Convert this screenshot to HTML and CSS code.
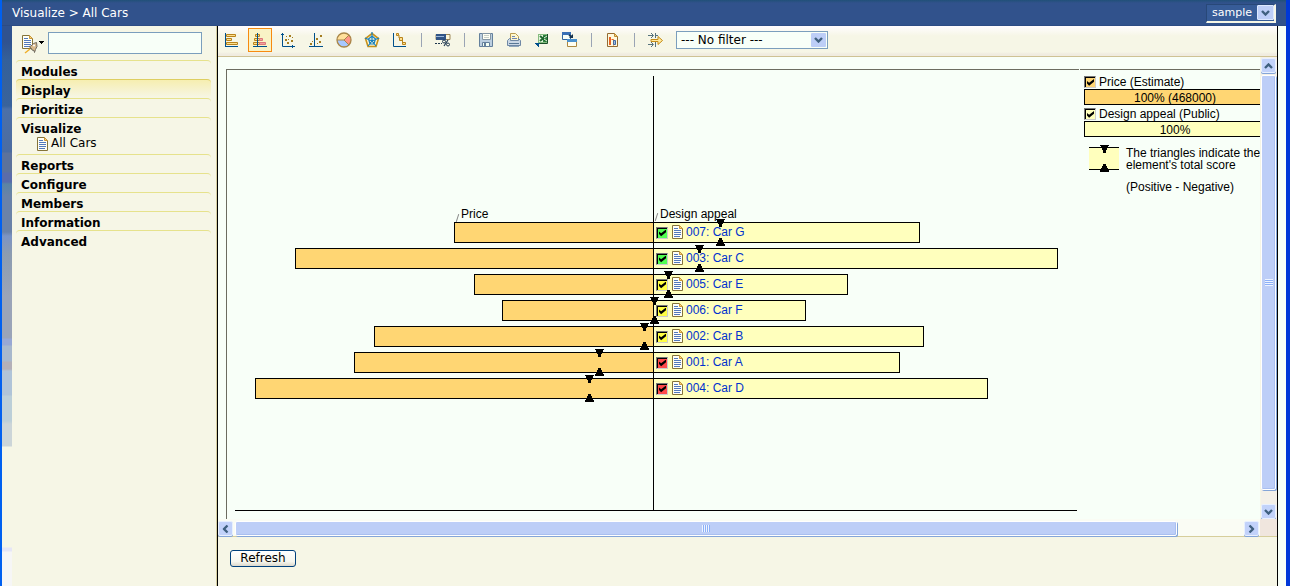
FILE: index.html
```html
<!DOCTYPE html>
<html lang="en">
<head>
<meta charset="utf-8">
<title>Visualize &gt; All Cars</title>
<link rel="stylesheet" href="styles.css">
</head>
<body>
<svg class="defs" aria-hidden="true">
  <symbol id="doc" viewBox="0 0 12 14"><path d="M.5.5h7l3 3v10H.5z" fill="#fffff6" stroke="#84733a"/><path d="M7.5.5v3h3z" fill="#ffd87a" stroke="#c8963a"/><path d="M2 3.500h4M2 5.500h7M2 7.500h7M2 9.500h7M2 11.500h6" stroke="#5278bd"/></symbol>
  <symbol id="chev" viewBox="0 0 9 6"><path d="M1 1l3.5 3.5L8 1" fill="none" stroke="#3f607f" stroke-width="2.4"/></symbol>
  <symbol id="marker" viewBox="0 0 9 27"><path d="M0 0h9v1H8v2H7v2H6v3H3V5H2V3H1V1H0zM3 19h3v2h1v2h1v2h1v2H0v-2h1v-2h1v-2h1z"/></symbol>
</svg>
<header class="topbar">
  <div class="crumbs">Visualize &gt; All Cars</div>
  <div class="account"><select aria-label="Account"><option>sample</option></select><span class="arrow"><svg><use href="#chev"/></svg></span></div>
</header>
<div class="main">
  <div class="strip"></div>
  <nav class="sidebar">
    <div class="search">
      <button class="new" aria-label="New item"><svg viewBox="0 0 23 19"><path d="M.5.5h7l3 3v10H.5z" fill="#fffff6" stroke="#84733a"/><path d="M7.5.5v3h3z" fill="#ffd87a" stroke="#c8963a"/><path d="M2 3.500h4M2 5.500h7M2 7.500h7M2 9.500h7M2 11.500h5" stroke="#5278bd"/><path d="M14.500 7.500l-3 1-2.500 2.500-2 .5 2 1.500 1 2 2 .5.500 2 1-3 1.500-3z" fill="#d8b88c" stroke="#6f6960"/><circle cx="12" cy="10.500" r="1" fill="#fff"/><path d="M3 18l5-4" stroke="#f0ae28" stroke-width="1.500"/><path d="M17 6h5v1h-1v1h-1v1h-1V8h-1V7h-1z"/></svg></button>
      <input type="text" aria-label="Search">
    </div>
    <ul class="menu">
      <li><a href="#">Modules</a></li>
      <li class="current"><a href="#">Display</a></li>
      <li><a href="#">Prioritize</a></li>
      <li><a href="#">Visualize</a>
        <a class="sub" href="#"><svg><use href="#doc"/></svg>All Cars</a></li>
      <li><a href="#">Reports</a></li>
      <li><a href="#">Configure</a></li>
      <li><a href="#">Members</a></li>
      <li><a href="#">Information</a></li>
      <li><a href="#">Advanced</a></li>
    </ul>
  </nav>
  <main class="content">
    <div class="toolbar">
      <button class="tool" aria-label="Bar chart"><svg viewBox="0 0 16 16"><path d="M2.500 2.500h9v2h-9zM2.500 6.500h5v2h-5zM2.500 10.500h11v2h-11z" fill="#ffe08c" stroke="#b8831c"/><path d="M1.500 1v13M1 14.500h13" stroke="#00508c" fill="none"/></svg></button>
      <button class="tool selected" aria-label="Skyline chart"><svg viewBox="0 0 16 16"><path d="M3.500 2.500h4v2h-4zM2.500 6.500h5v2h-5zM1.500 10.500h6v2h-6z" fill="#ffe08c" stroke="#b8831c"/><path d="M7.500 6.500h3v2h-3zM7.500 10.500h6v2h-6z" fill="#f7a0a0" stroke="#dc7979"/><path d="M5.500 1v13M1 14.500h14" stroke="#00508c"/></svg></button>
      <button class="tool" aria-label="Scatter chart"><svg viewBox="0 0 16 16"><path d="M2.500 1v13.500H15M1 2.500h3M12.500 13v3" stroke="#00508c" fill="none"/><path d="M6 4h1v1H6zM9 3h2v2H9zM5 7h2v2H5zM8 7h1v1H8zM11 8h2v2h-2zM7 10h2v2H7zM12 5h1v1h-1z" fill="#a47c20"/></svg></button>
      <button class="tool" aria-label="Portfolio chart"><svg viewBox="0 0 16 16"><path d="M6.500 1v13M1 14.500h14" stroke="#00508c"/><path d="M12 3h2v2h-2zM8 6h2v2H8zM11 9h2v2h-2zM2 11h2v2H2zM4 9h1v1H4zM9 11h1v1H9z" fill="#a47c20"/></svg></button>
      <button class="tool" aria-label="Pie chart"><svg viewBox="0 0 16 16"><circle cx="8" cy="8" r="7" fill="#ffe09a"/><path d="M8 8l5-5a7 7 0 0 1 0 10z" fill="#ff9588"/><path d="M8 8l5 5A7 7 0 0 1 1 8z" fill="#a8c8ff"/><path d="M1 8h7l5-5M8 8l5 5" stroke="#a98648" fill="none"/><circle cx="8" cy="8" r="7" fill="none" stroke="#a98648" stroke-width="1.300"/></svg></button>
      <button class="tool" aria-label="Radar chart"><svg viewBox="0 0 16 16"><path d="M8 1.500l6.500 5-2.500 8H4l-2.500-8z" fill="#fff6d0" stroke="#c8921a" stroke-width="1.600"/><path d="M8 0v9M8 9l7-3M8 9l4 5M8 9l-4 5M8 9L1 6M8 4l3.500 3L10 12H6L4.500 7z" fill="none" stroke="#1680c0" stroke-width="1.200"/></svg></button>
      <button class="tool" aria-label="Step chart"><svg viewBox="0 0 16 16"><path d="M1.500 1v13.500H14" stroke="#00508c" fill="none"/><path d="M4.500 1.500h2v2h-2zM7.500 5.500h3v3h-3zM10.500 10.500h3v2h-3z" fill="#ffe08c" stroke="#b8831c"/><path d="M7 3v3M10.500 8v3" stroke="#b8831c"/></svg></button>
      <span class="sep"></span>
      <button class="tool" aria-label="Show percentages"><svg viewBox="0 0 16 16"><path d="M1 2.500h14v5H1z" fill="#fff8d8" stroke="#9b8558"/><path d="M1 2h10v6H1z" fill="#315486"/><path d="M1 4h8v1H1z" fill="#9cb8dc"/><path d="M0 11.500h2M3 11.500h2M6 11.500h1M13 8l-4 6" stroke="#203850" stroke-width="1.200"/><circle cx="9" cy="9.500" r="1.500" fill="none" stroke="#203850"/><circle cx="13" cy="12.500" r="1.500" fill="none" stroke="#203850"/></svg></button>
      <span class="sep"></span>
      <button class="tool" aria-label="Save"><svg viewBox="0 0 16 16"><path d="M1.500 1.500h13v13h-13z" fill="#bccfe0" stroke="#64809c"/><path d="M4.500 1.500h8v6h-8z" fill="#fffff4" stroke="#8496a4"/><path d="M6 3.500h5M6 5.500h5" stroke="#c8d0c8"/><path d="M4.500 10.500h7v4h-7z" fill="#f4fff4" stroke="#64809c"/><path d="M6 11h2v3H6z" fill="#64809c"/></svg></button>
      <button class="tool" aria-label="Print"><svg viewBox="0 0 16 16"><path d="M4.500 8.500v-7h5l3 3v4" fill="#fff7cc" stroke="#b89b50"/><path d="M6 4.500h3M6 6.500h5" stroke="#6d86b8"/><path d="M1.500 8.500l2-2h1v2h8v-2l2 2v5h-13z" fill="#cad7e5" stroke="#6f88a5"/><path d="M3 11.500h10" stroke="#587795"/><path d="M3 14.500h10" stroke="#8ea5bb"/></svg></button>
      <button class="tool" aria-label="Export to spreadsheet"><svg viewBox="0 0 16 16"><path d="M4 2h10v9H4z" fill="#86bc80"/><path d="M5 3h4v7H5z" fill="#e8f7df"/><path d="M9 3h5v7H9z" fill="#318641"/><path d="M6 4l6 5M12 4L6 9" stroke="#1e6a2e" stroke-width="2"/><path d="M10 7l3 2M10 6l3-2" stroke="#e8f7df"/><path d="M13.500 2v9.500H6" fill="none" stroke="#194f27"/><path d="M1 11h5v1H5v3H4v-1H3v-1H2v-1H1z" fill="#00508c"/></svg></button>
      <button class="tool" aria-label="Copy window"><svg viewBox="0 0 16 16"><path d="M.5.5h8v7h-8z" fill="#f8fff8" stroke="#32659d"/><path d="M0 0h9v3H0z" fill="#3970b5"/><path d="M7 3l3 2" stroke="#17334c" stroke-width="2"/><path d="M11 2v4H7z" fill="#17334c"/><path d="M5.500 7.500h9v7h-9z" fill="#fffff0" stroke="#ad8840"/><path d="M5 7h10v3H5z" fill="#4b91ce"/></svg></button>
      <span class="sep"></span>
      <button class="tool" aria-label="Report"><svg viewBox="0 0 16 16"><path d="M2.500 1.500h7l3 3v10h-10z" fill="#fff9dc" stroke="#946b32"/><path d="M9.500 1.500v3h3z" fill="#ffd37a" stroke="#bc8d35"/><path d="M4 5h2v8H4z" fill="#e66224"/><path d="M6.500 7.500h2v6" fill="none" stroke="#e66224"/><path d="M8.500 8.500h2v4h-2z" fill="#9cb8e0" stroke="#426aa0"/></svg></button>
      <span class="sep"></span>
      <button class="tool" aria-label="Filter"><svg viewBox="0 0 16 16"><path d="M0 3.500h5M3 1l2.500 2.500L3 6M10 3.500H7M7.500 1v5M0 12.500h5M3 10l2.500 2.500L3 15M7.500 10v5" fill="none" stroke="#56727c"/><path d="M3 7.500h7v-3l4.500 4-4.500 4v-3H3z" fill="#ffeaa0" stroke="#c48b16"/></svg></button>
      <div class="filter"><select aria-label="Filter"><option>--- No filter ---</option></select><span class="arrow"><svg><use href="#chev"/></svg></span></div>
    </div>
    <div class="pane">
      <div class="view">
        <section class="chart">
          <div class="plot">
            <div class="axis"><i></i><i></i></div>
            <div class="row heads">
              <div class="neg"><span class="head" style="width:47.6%">Price</span></div>
              <div class="pos"><span class="head">Design appeal</span></div>
            </div>
            <div class="row"><div class="neg"><div class="bar" style="width:47.6%"></div></div><div class="pos"><div class="bar" style="width:63%"><input class="green" type="checkbox" checked aria-label="Select Car G"><a href="#"><svg><use href="#doc"/></svg>007: Car G</a></div></div><svg class="marker" style="left:57.6%"><use href="#marker"/></svg></div>
            <div class="row"><div class="neg"><div class="bar" style="width:85.6%"></div></div><div class="pos"><div class="bar" style="width:95.5%"><input class="green" type="checkbox" checked aria-label="Select Car C"><a href="#"><svg><use href="#doc"/></svg>003: Car C</a></div></div><svg class="marker" style="left:55.1%"><use href="#marker"/></svg></div>
            <div class="row"><div class="neg"><div class="bar" style="width:42.8%"></div></div><div class="pos"><div class="bar" style="width:46%"><input class="yellow" type="checkbox" checked aria-label="Select Car E"><a href="#"><svg><use href="#doc"/></svg>005: Car E</a></div></div><svg class="marker" style="left:51.4%"><use href="#marker"/></svg></div>
            <div class="row"><div class="neg"><div class="bar" style="width:36.1%"></div></div><div class="pos"><div class="bar" style="width:36.1%"><input class="yellow" type="checkbox" checked aria-label="Select Car F"><a href="#"><svg><use href="#doc"/></svg>006: Car F</a></div></div><svg class="marker" style="left:49.8%"><use href="#marker"/></svg></div>
            <div class="row"><div class="neg"><div class="bar" style="width:66.7%"></div></div><div class="pos"><div class="bar" style="width:63.9%"><input class="yellow" type="checkbox" checked aria-label="Select Car B"><a href="#"><svg><use href="#doc"/></svg>002: Car B</a></div></div><svg class="marker" style="left:48.6%"><use href="#marker"/></svg></div>
            <div class="row"><div class="neg"><div class="bar" style="width:71.5%"></div></div><div class="pos"><div class="bar" style="width:58.3%"><input class="red" type="checkbox" checked aria-label="Select Car A"><a href="#"><svg><use href="#doc"/></svg>001: Car A</a></div></div><svg class="marker" style="left:43.2%"><use href="#marker"/></svg></div>
            <div class="row"><div class="neg"><div class="bar" style="width:95.2%"></div></div><div class="pos"><div class="bar" style="width:79%"><input class="red" type="checkbox" checked aria-label="Select Car D"><a href="#"><svg><use href="#doc"/></svg>004: Car D</a></div></div><svg class="marker" style="left:42%"><use href="#marker"/></svg></div>
          </div>
        </section>
        <aside class="legend">
          <label><input class="orange" type="checkbox" checked>Price (Estimate)</label>
          <div class="weight orange">100% (468000)</div>
          <label><input class="cream" type="checkbox" checked>Design appeal (Public)</label>
          <div class="weight cream">100%</div>
          <div class="note">
            <div class="sample"><svg><use href="#marker"/></svg></div>
            <div class="note-text"><p>The triangles indicate the<br>element's total score</p><p>(Positive - Negative)</p></div>
          </div>
        </aside>
      </div>
      <div class="vbar"><button class="sb up" aria-label="Scroll up"><svg><use href="#chev"/></svg></button><div class="thumb"><i class="grip"></i></div><button class="sb" aria-label="Scroll down"><svg><use href="#chev"/></svg></button></div>
      <div class="hbar"><button class="sb left" aria-label="Scroll left"><svg><use href="#chev"/></svg></button><div class="track"><div class="thumb"><i class="grip"></i></div></div><button class="sb right" aria-label="Scroll right"><svg><use href="#chev"/></svg></button></div>
      <div class="corner"></div>
    </div>
    <div class="footer"><button class="refresh">Refresh</button></div>
  </main>
  <div class="margin"></div>
</div>
</body>
</html>
```

FILE: styles.css
```css
* { box-sizing: border-box; }
html { height: 100%; }
body {
  margin: 0;
  height: 100vh;
  display: flex;
  flex-direction: column;
  overflow: hidden;
  border-left: 2px solid #0060f0;
  border-right: 4px solid #0038d8;
  background: #f8fff8;
  color: #000;
  font: 12px "DejaVu Sans", Verdana, sans-serif;
}
button { padding: 0; margin: 0; border: 0; background: none; font: inherit; color: inherit; }
a { color: inherit; text-decoration: none; }
svg { display: block; flex: none; }
.defs { width: 0; height: 0; position: absolute; }

.topbar {
  height: 26px;
  flex: none;
  display: flex;
  align-items: center;
  justify-content: space-between;
  padding: 0 10px;
  background: linear-gradient(#215078 0, #31528c 3px, #31528c 25px, #28457c 26px);
  color: #fff;
}
.account, .filter { display: flex; align-items: center; }
.account {
  height: 19px;
  width: 70px;
  border: solid #284878;
  border-width: 1px 0 0 1px;
  border-right: 2px solid #f6f6e6;
  border-bottom: 2px solid #f6f6e6;
  background: #375c98;
  font-size: 11px;
}
select {
  appearance: none;
  flex: 1;
  min-width: 0;
  padding: 0 5px;
  border: 0;
  background: none;
  font: inherit;
  color: inherit;
}
.arrow {
  display: flex;
  align-items: center;
  justify-content: center;
  width: 15px;
  height: 14px;
  background: #bdcef7;
  border-radius: 1px;
}
.account .arrow { width: 17px; height: 15px; border: 1px solid #dce8ff; }
.arrow svg { width: 9px; height: 6px; }

.main { flex: 1; min-height: 0; display: flex; }
.strip {
  width: 10px;
  background: linear-gradient(#30528f 0, #30528f 16px, #34609a 34px, #39639c 80px, #4c70a8 83px, #4c6ca0 126px, #5c729c 127px, #5c729c 146px, #5a6caa 147px, #5a6caa 156px, #5a84a4 158px, #6a82a8 170px, #6a82a8 206px, #7c94c4 210px, #8c9cb0 228px, #9aa4b8 270px, #9aa4b8 312px, #98a8d4 313px, #98a8d4 319px, #a8b8cc 320px, #a8b8cc 335px, #b4b0b8 336px, #b4b0b8 343px, #b0c4d8 345px, #b0c4d8 369px, #bccfd8 370px, #bccfd8 395px, #ccd5d8 398px, #ccd5d8 420px, #f6f6e6 421px, #f6f6e6 521px, #e6e6f6 522px, #e6e6f6 525px, #f6f6f6 526px);
}
.sidebar {
  width: 206px;
  padding: 6px 4px 0;
  background: #f6f6e6;
  border-right: 1px solid #000;
  box-shadow: inset -1px 0 #d6cea0;
}
.search { display: flex; gap: 3px; padding-left: 6px; }
.new { width: 23px; height: 23px; display: flex; align-items: center; }
.new svg { width: 23px; height: 19px; margin-top: 1px; }
.search input { width: 154px; height: 22px; border: 1px solid #7b9ebd; background: #f8fff8; font: inherit; }
.menu { list-style: none; margin: 5px 0 0; padding: 0; width: 195px; }
.menu li {
  border-top: 1px solid #e6e28c;
  border-radius: 4px;
  padding: 2px 5px 0;
  line-height: 18px;
  font-weight: bold;
}
.menu li > a { display: block; height: 16px; }
.menu .current { border-color: #dece60; background: linear-gradient(#f6eeb0, #f6f6e6); }
.menu li > .sub { display: flex; align-items: center; gap: 2px; height: 18px; padding: 0 0 4px 16px; font-weight: normal; }
.sub svg { width: 12px; height: 14px; margin-top: 1px; }

.content { flex: 1; min-width: 0; display: flex; flex-direction: column; border-right: 1px solid #000; }
.toolbar {
  height: 31px;
  flex: none;
  display: flex;
  align-items: center;
  gap: 4px;
  padding: 0 2px 2px;
  background: linear-gradient(#fffcff, #f6f6e6 10px, #f6f6e6 26px, #f0ece0 28px);
  border-bottom: 1px solid #cec294;
}
.tool { width: 24px; height: 24px; flex: none; display: flex; align-items: center; justify-content: center; border: 1px solid transparent; }
.tool.selected { border-color: #f78a10; background: #f9f3c6; }
.tool svg { width: 16px; height: 16px; }
.sep { width: 11px; height: 14px; flex: none; background: linear-gradient(#9aa4b4, #9aa4b4) center / 1px 100% no-repeat; }
.filter { width: 152px; height: 18px; margin-left: 4px; padding-right: 1px; border: 1px solid #7b9ebd; background: #f8fff8; }
.filter select { padding: 0 4px; }

.pane { flex: 1; min-height: 0; display: grid; grid-template-columns: minmax(0, 1fr) 17px; grid-template-rows: minmax(0, 1fr) 17px; border-bottom: 1px solid #d6ce9c; }
.view { display: flex; overflow: hidden; padding: 12px 0 0 8px; font: 12px "Liberation Sans", Arial, sans-serif; }
.chart { flex: 1; display: flex; border: solid #6c6c60; border-width: 1px 0 0 1px; padding: 6px 2px 8px 8px; }
.plot { flex: 1; position: relative; padding-top: 130px; border-bottom: 1px solid #000; }
.axis, .row { display: grid; grid-template-columns: 418fr 424fr; }
.axis { position: absolute; inset: 0; }
.axis i + i { border-left: 1px solid #000; }
.row { position: relative; height: 21px; margin-bottom: 5px; }
.heads { height: 16px; margin: 0; }
.neg { display: flex; justify-content: flex-end; }
.head { display: flex; align-items: center; }
.head::before { content: ""; width: 1px; height: 8px; margin: 7px 3px 0; background: #888; transform: rotate(18deg); }
.bar { height: 21px; border: 1px solid #000; background: #ffd673; }
.neg .bar { border-right: 0; }
.pos .bar { display: flex; align-items: center; gap: 4px; padding-left: 2px; background: #ffffbd; }
.bar a { display: flex; align-items: center; gap: 2px; color: #0031ce; white-space: nowrap; line-height: 14px; padding-bottom: 1px; }
.bar a svg { width: 12px; height: 14px; }
.marker { position: absolute; top: -3px; width: 9px; height: 27px; margin-left: -4px; }

input[type="checkbox"] {
  appearance: none;
  flex: none;
  width: 12px;
  height: 12px;
  margin: 0;
  border: 1px solid #777;
  border-right-color: #ccc;
  border-bottom-color: #ccc;
  box-shadow: inset 1px 1px #000;
}
input[type="checkbox"]:checked::after {
  content: "";
  display: block;
  width: 7px;
  height: 7px;
  margin: 2px;
  background: #000;
  clip-path: polygon(0 30%, 30% 55%, 100% 0, 100% 38%, 30% 95%, 0 65%);
}
.green { background: #52ff52; }
.yellow { background: #ffff42; }
.red { background: #ff4a4a; }
.orange { background: #ffd673; }
.cream { background: #ffffbd; }

.legend { width: 180px; margin-left: 1px; padding: 5px 0 0 4px; border-top: 1px solid #6c6c60; overflow: hidden; }
.legend label { display: flex; align-items: center; gap: 3px; height: 14px; }
.weight { width: 182px; height: 16px; margin-bottom: 2px; border: 1px solid #000; line-height: 16px; text-align: center; }
.note { display: flex; gap: 7px; margin: 8px 0 0 5px; white-space: nowrap; }
.sample { width: 30px; height: 23px; margin-top: 2px; flex: none; border: solid #000; border-width: 1px 0; background: #ffffbd; }
.sample svg { width: 9px; height: 27px; margin: -3px auto 0; }
.note-text { line-height: 12px; }
.note-text p { margin: 0 0 10px; }
.note-text p:first-child { margin-top: 2px; }

.vbar { display: flex; flex-direction: column; gap: 2px; padding: 1px 1px 0 0; background: #f4f0e8; border-left: 1px solid #f6f6e6; }
.vbar .thumb { flex: 1; margin-bottom: 12px; }
.hbar { display: flex; gap: 2px; padding: 2px 1px 0 0; background: #fafcf4; }
.track { flex: 1; display: flex; }
.track .thumb { width: 93.5%; }
.thumb { display: flex; align-items: center; justify-content: center; border: 1px solid #fff; border-radius: 2px; background: #bdcef7; box-shadow: inset -1px -1px #a9bff0, 1px 1px #84a5d8; }
.grip { width: 8px; height: 7px; background: repeating-linear-gradient(90deg, #eef4ff 0 1px, #8cb0f8 1px 2px); }
.vbar .grip { background: repeating-linear-gradient(#eef4ff 0 1px, #8cb0f8 1px 2px); }
.sb { width: 15px; height: 15px; flex: none; display: flex; align-items: center; justify-content: center; border: 1px solid #e8f0ff; border-radius: 2px; background: #c2d2fa; box-shadow: 0 1px #84a5d8; }
.sb svg { width: 9px; height: 6px; }
.up svg { transform: rotate(180deg); }
.left svg { transform: rotate(90deg); }
.right svg { transform: rotate(-90deg); }
.corner { background: #f0e6de; }

.footer { height: 49px; flex: none; background: #f6f6e6; padding: 13px 12px; }
.refresh { width: 66px; height: 17px; border: 1px solid #00407c; border-radius: 3px; background: linear-gradient(#fff, #f6f6ee 70%, #dcd8cc); line-height: 15px; }
.margin { width: 8px; }
```
